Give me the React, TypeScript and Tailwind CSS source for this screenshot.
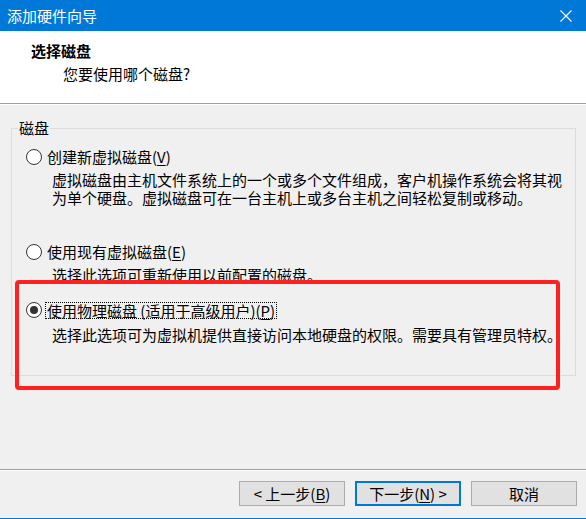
import React from "react";

function Radio({ checked }: { checked?: boolean }) {
  return (
    <span className="w-[16px] h-[16px] rounded-full border border-[#333333] bg-white flex items-center justify-center shrink-0">
      {checked && <span className="w-[8px] h-[8px] rounded-full bg-[#333333]" />}
    </span>
  );
}

function U({ c }: { c: string }) {
  return <span className="underline underline-offset-[2px]">{c}</span>;
}

export default function App() {
  return (
    <div className="relative w-[586px] h-[519px] bg-[#f0f0f0] flex flex-col font-['Noto_Sans_CJK_SC',sans-serif] text-[15px] text-black overflow-hidden">
      {/* Title bar */}
      <div className="h-[31px] bg-[#0078d7] flex items-center justify-between pl-[7px] pr-[14px] shrink-0">
        <span className="text-white text-[15px] leading-[20px]">添加硬件向导</span>
        <svg width="12" height="12" viewBox="0 0 12 12" className="mt-[1px]">
          <path d="M0.5 0.5 L11.5 11.5 M11.5 0.5 L0.5 11.5" stroke="#ffffff" strokeWidth="1.1" />
        </svg>
      </div>

      {/* Header */}
      <div className="h-[72px] bg-white shrink-0 pt-[10px]">
        <div className="pl-[31px] font-bold leading-[20px]">选择磁盘</div>
        <div className="pl-[63px] mt-[3px] leading-[20px]">您要使用哪个磁盘?</div>
      </div>
      <div className="h-px bg-[#a0a0a0] shrink-0" />
      <div className="h-px bg-white shrink-0" />

      {/* Content */}
      <div className="flex-1 pt-[13px] pl-[11px] pr-[10px]">
        <fieldset className="border border-[#dcdcdc] h-[258px] px-0 pb-0">
          <legend className="ml-[6px] px-[1px] leading-[20px]">磁盘</legend>
          <div className="pl-[14px] pt-[9px] flex flex-col">
            <div className="flex items-center gap-[5px] h-[20px]">
              <Radio />
              <span className="leading-[20px]">
                创建新虚拟磁盘(<U c="V" />)
              </span>
            </div>
            <div className="pl-[26px] mt-[4px] leading-[18px]">
              虚拟磁盘由主机文件系统上的一个或多个文件组成，客户机操作系统会将其视
              <br />
              为单个硬盘。虚拟磁盘可在一台主机上或多台主机之间轻松复制或移动。
            </div>

            <div className="flex items-center gap-[5px] h-[20px] mt-[35px]">
              <Radio />
              <span className="leading-[20px]">
                使用现有虚拟磁盘(<U c="E" />)
              </span>
            </div>
            <div className="pl-[26px] mt-[4px] leading-[18px]">选择此选项可重新使用以前配置的磁盘。</div>

            <div className="flex items-center gap-[4px] h-[20px] mt-[16px]">
              <Radio checked />
              <span className="leading-[15px] outline outline-1 outline-dotted outline-[#000] px-[1px]">
                使用物理磁盘 (适用于高级用户)(<U c="P" />)
              </span>
            </div>
            <div className="pl-[26px] mt-[6px] leading-[18px]">
              选择此选项可为虚拟机提供直接访问本地硬盘的权限。需要具有管理员特权。
            </div>
          </div>
        </fieldset>
      </div>

      {/* Footer */}
      <div className="h-px bg-[#a0a0a0] shrink-0" />
      <div className="h-px bg-white shrink-0" />
      <div className="flex justify-end gap-[10px] pr-[9px] pt-[10px] h-[47px] shrink-0">
        <button className="w-[106px] h-[25px] bg-[#e1e1e1] border border-[#adadad] leading-[20px] flex items-center justify-center">
          &lt; 上一步(<U c="B" />)
        </button>
        <button className="w-[106px] h-[25px] bg-[#e1e1e1] border-2 border-[#0078d7] leading-[20px] flex items-center justify-center">
          下一步(<U c="N" />) &gt;
        </button>
        <button className="w-[106px] h-[25px] bg-[#e1e1e1] border border-[#adadad] leading-[20px] flex items-center justify-center">
          取消
        </button>
      </div>
      <div className="h-px bg-[#0078d7] shrink-0" />

      {/* Red annotation box */}
      <div className="absolute left-[15px] top-[280px] w-[545px] h-[110px] border-[4px] border-[#ff2020] rounded-[4px] pointer-events-none" />
    </div>
  );
}
